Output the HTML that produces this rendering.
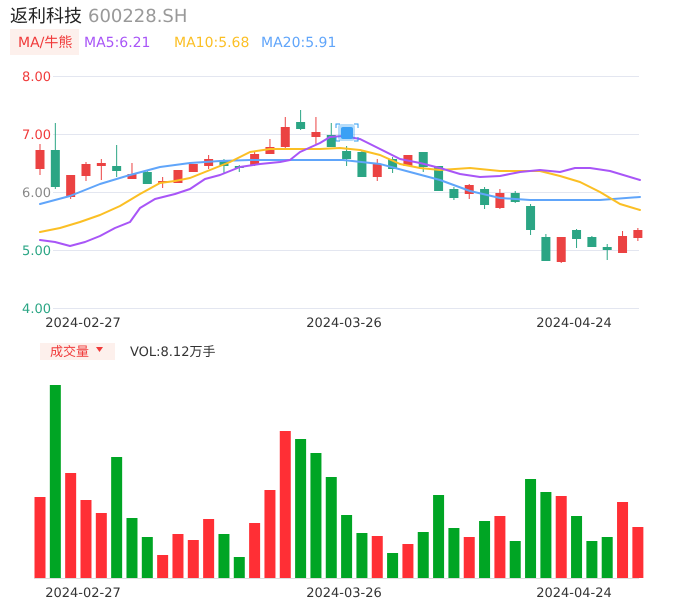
<!DOCTYPE html>
<html><head><meta charset="utf-8"><style>
body{margin:0;width:686px;height:606px;background:#fff;overflow:hidden;font-family:"Liberation Sans","DejaVu Sans","Noto Sans CJK SC",sans-serif}
svg{position:absolute;left:0;top:0}
</style></head><body>
<svg id="s" width="686" height="606" xmlns="http://www.w3.org/2000/svg" font-family="DejaVu Sans, Noto Sans CJK SC, sans-serif" text-rendering="geometricPrecision">
<text x="10" y="22" font-size="18" fill="#222" font-family="Noto Sans CJK SC, sans-serif">返利科技</text>
<text x="88" y="22" font-size="18" fill="#999">600228.SH</text>
<rect x="10" y="29" width="69" height="26" fill="#fdf0ec"/>
<text x="18" y="47" font-size="14" fill="#f03a3a" font-family="DejaVu Sans, Noto Sans CJK SC, sans-serif">MA/牛熊</text>
<text x="84" y="47" font-size="14" fill="#a855f7">MA5:6.21</text>
<text x="174" y="47" font-size="14" fill="#fbbf24">MA10:5.68</text>
<text x="261" y="47" font-size="14" fill="#60a5fa">MA20:5.91</text>
<g stroke="#e3e6f0" stroke-width="1">
<line x1="53" x2="639" y1="76.5" y2="76.5"/><line x1="53" x2="639" y1="134.5" y2="134.5"/><line x1="53" x2="639" y1="192.5" y2="192.5"/><line x1="53" x2="639" y1="250.5" y2="250.5"/><line x1="53" x2="639" y1="308.5" y2="308.5"/>
</g>
<g font-size="13" text-anchor="end">
<text x="51" y="81" fill="#f03a3a">8.00</text><text x="51" y="139" fill="#f03a3a">7.00</text><text x="51" y="197" fill="#888">6.00</text><text x="51" y="255" fill="#2aa584">5.00</text><text x="51" y="313" fill="#2aa584">4.00</text>
</g>
<g font-size="13" fill="#333" text-anchor="middle">
<text x="83" y="327">2024-02-27</text><text x="344" y="327">2024-03-26</text><text x="574" y="327">2024-04-24</text>
<text x="83" y="597">2024-02-27</text><text x="344" y="597">2024-03-26</text><text x="574" y="597">2024-04-24</text>
</g>
<g id="c"></g>
<g fill="none" stroke-width="2" stroke-linejoin="round" stroke-linecap="round">
<polyline stroke="#60a5fa" points="40,204 70,196 100,184 130,175 160,167 190,163 220,161 250,160 280,160 310,160 343,160 380,164 410,172 440,180 470,191 500,198 530,200 560,200 600,200 640,197"/>
<polyline stroke="#fbbf24" points="40,232 60,228 80,222 100,215 120,206 140,194 160,183 175,181 190,178 210,170 230,162 250,152 270,149 300,149 320,149 340,148 360,150 380,155 400,164 420,168 440,170 470,168 500,171 520,171 540,171 560,176 580,182 600,192 620,204 640,210"/>
<polyline stroke="#a855f7" points="40,240 55,242 70,246 85,242 100,236 115,228 130,222 140,208 155,199 175,194 190,189 205,179 220,175 240,167 260,164 280,162 290,160 300,152 320,143 330,137 343,136 360,139 380,149 400,159 420,163 440,168 460,174 480,177 500,176 520,172 540,170 560,172 575,168 590,168 610,171 640,180"/>
</g>
<g>
<rect x="338" y="124" width="17" height="17" rx="3" fill="#2b9bf0" opacity="0.35"/>
<rect x="341" y="127" width="12" height="12" rx="2" fill="#3aa0f5"/>
<path d="M336 128v-4h4M354 124h4v4M358 137v4h-4M340 141h-4v-4" stroke="#2b9bf0" fill="none" stroke-width="1"/>
</g>
<rect x="40" y="343" width="75" height="17" fill="#fdf0ec"/>
<text x="50" y="356" font-size="13" fill="#f03a3a" font-family="Noto Sans CJK SC, sans-serif">成交量</text>
<path d="M96 347h7l-3.5 5z" fill="#f03a3a"/>
<text x="130" y="356" font-size="13" fill="#333" font-family="DejaVu Sans, Noto Sans CJK SC, sans-serif">VOL:8.12万手</text>
<line x1="34" x2="639" y1="578.5" y2="578.5" stroke="#ddd"/>
<g id="v"></g>
</svg>
<script>
var NS="http://www.w3.org/2000/svg";
function el(p,t,a){var e=document.createElementNS(NS,t);for(var k in a)e.setAttribute(k,a[k]);p.appendChild(e);}
var C=[["r",150,169,144,175],["g",150,187,123,189],["r",175,197,175,199],["r",164,176,162,181],["r",163,166,159,180],["g",166,171,145,177],["r",174,179,163,179],["g",172,184,170,184],["r",181,183,177,188],["r",170,183,170,183],["r",164,172,164,172],["r",159,166,155,169],["g",161,166,159,173],["g",166,168,165,172],["r",154,165,152,166],["r",147,154,139,154],["r",127,147,117,149],["g",122,129,110,130],["r",132,137,117,144],["g",135,147,123,147],["g",151,159,146,166],["g",152,177,150,177],["r",164,177,159,181],["g",159,169,157,173],["r",155,166,155,166],["g",152,167,152,172],["g",166,191,166,191],["g",189,198,187,200],["r",185,194,184,199],["g",189,205,187,209],["r",193,208,189,209],["g",193,202,191,203],["g",206,230,204,235],["g",237,261,234,261],["r",237,262,237,263],["g",230,239,229,248],["g",237,247,236,247],["g",247,250,244,260],["r",236,253,231,253],["r",230,238,228,241]];
var V=[["r",497],["g",385],["r",473],["r",500],["r",513],["g",457],["g",518],["g",537],["r",555],["r",534],["r",540],["r",519],["g",534],["g",557],["r",523],["r",490],["r",431],["g",439],["g",453],["g",477],["g",515],["g",533],["r",536],["g",553],["r",544],["g",532],["g",495],["g",528],["r",537],["g",521],["r",516],["g",541],["g",479],["g",492],["r",496],["g",516],["g",541],["g",537],["r",502],["r",527]];
var cg=document.getElementById("c"),vg=document.getElementById("v");
for(var i=0;i<40;i++){var x=40+i*15.33;var c=C[i];var col=c[0]=="r"?"#eb4242":"#2ba584";
el(cg,"line",{x1:x,x2:x,y1:c[3],y2:c[4],stroke:col,"stroke-width":1});
el(cg,"rect",{x:x-4.5,y:c[1],width:9,height:Math.max(1.5,c[2]-c[1]),fill:col});
var v=V[i];el(vg,"rect",{x:x-5.5,y:v[1],width:11,height:578-v[1],fill:v[0]=="r"?"#ff2f35":"#00a524"});}
</script>
</body></html>
